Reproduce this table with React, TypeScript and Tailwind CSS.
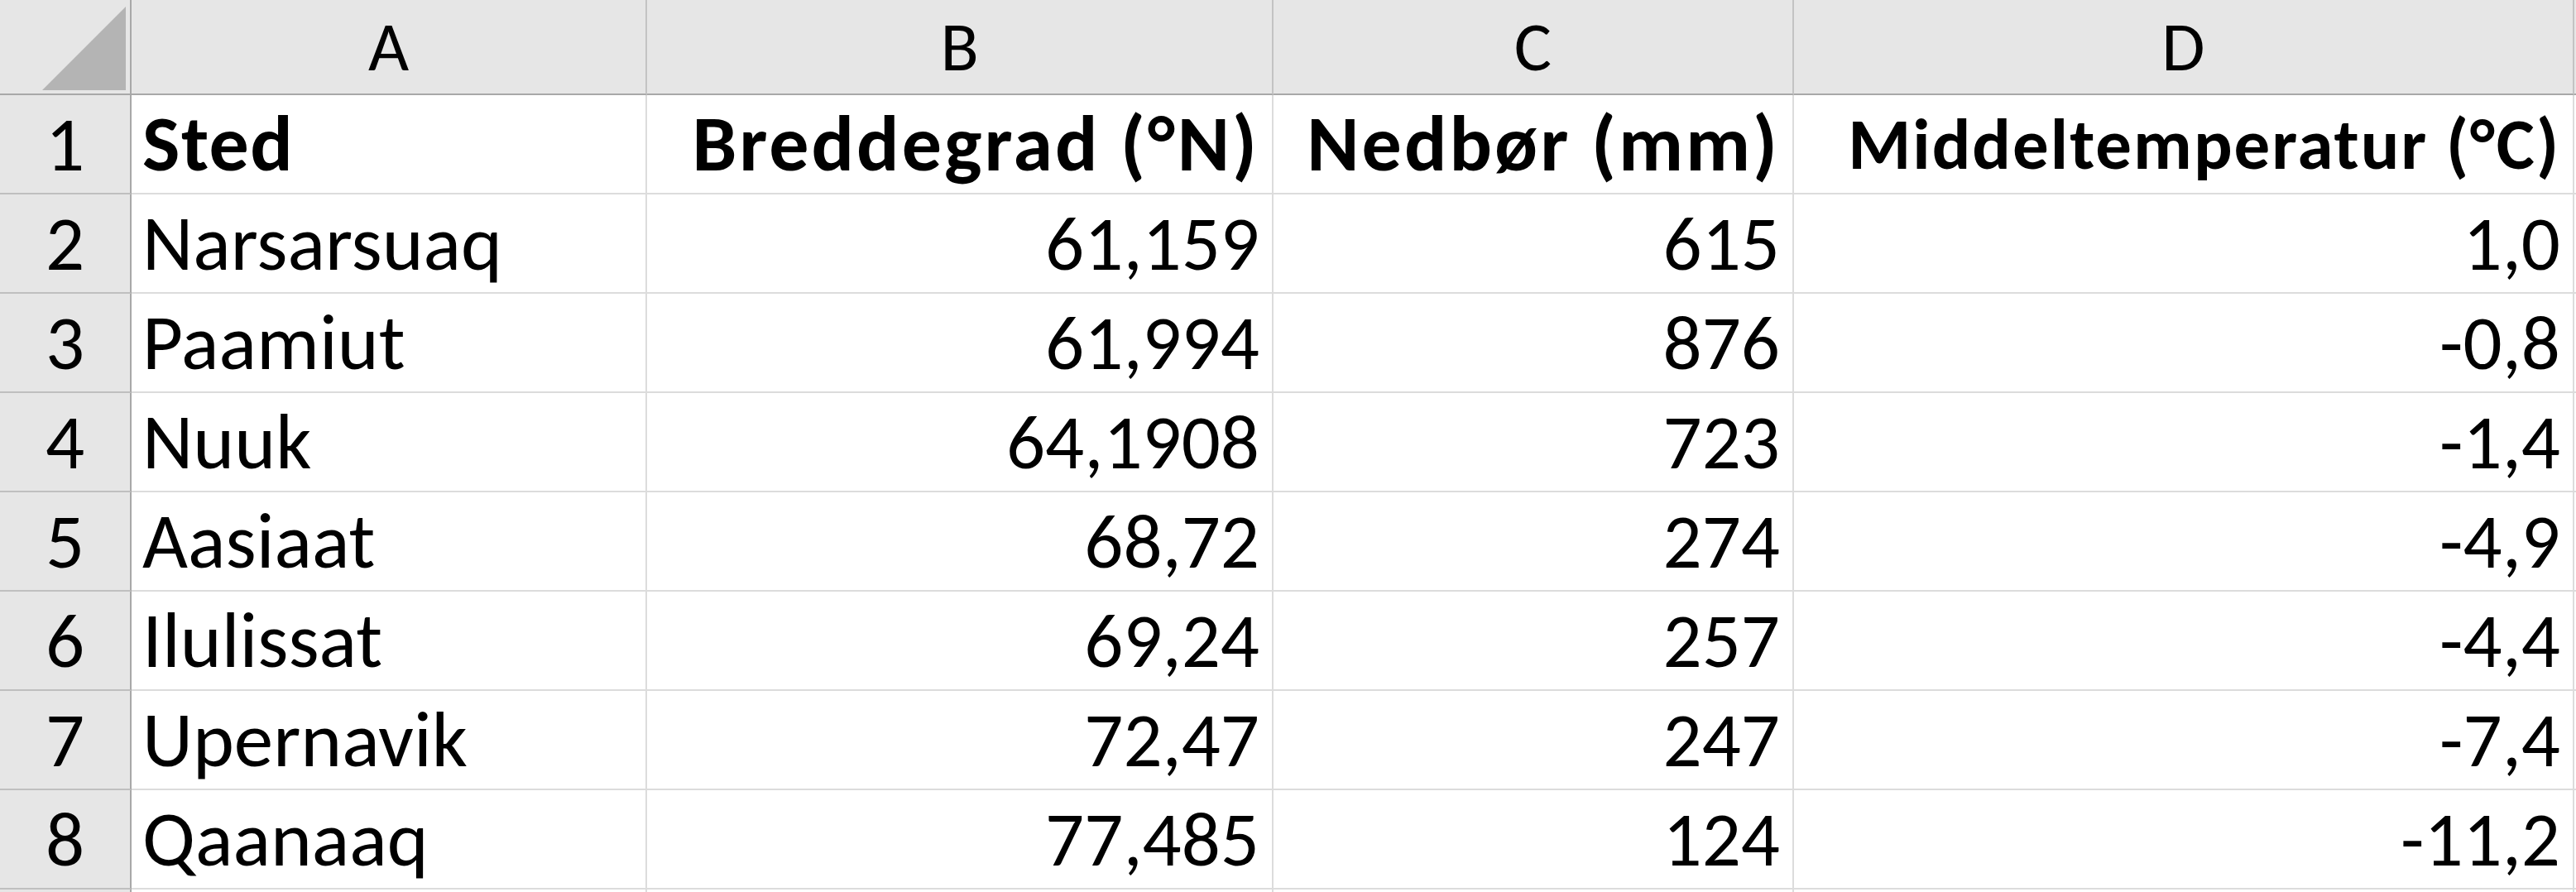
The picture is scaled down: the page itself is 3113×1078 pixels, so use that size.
import React from "react";

type Row = { sted: string; b: string; c: string; d: string };

const rows: Row[] = [
  { sted: "Narsarsuaq", b: "61,159", c: "615", d: "1,0" },
  { sted: "Paamiut", b: "61,994", c: "876", d: "-0,8" },
  { sted: "Nuuk", b: "64,1908", c: "723", d: "-1,4" },
  { sted: "Aasiaat", b: "68,72", c: "274", d: "-4,9" },
  { sted: "Ilulissat", b: "69,24", c: "257", d: "-4,4" },
  { sted: "Upernavik", b: "72,47", c: "247", d: "-7,4" },
  { sted: "Qaanaaq", b: "77,485", c: "124", d: "-11,2" },
];

const colHead =
  "h-[115px] bg-[#e6e6e6] border-r-2 border-b-2 border-r-[#c3c3c3] border-b-[#a8a8a8] flex items-center justify-center text-[85px] leading-none text-black";
const rowHead =
  "h-[120px] bg-[#e6e6e6] border-r-2 border-b-2 border-r-[#a8a8a8] border-b-[#bfbfbf] flex items-center justify-center text-[93px] leading-none text-black";
const cellL =
  "h-[120px] bg-white border-r-2 border-b-2 border-[#dcdcdc] flex items-center justify-start pl-[13px] text-[95px] leading-none text-black whitespace-nowrap overflow-hidden";
const cellR =
  "h-[120px] bg-white border-r-2 border-b-2 border-[#dcdcdc] flex items-center justify-end pr-[15px] text-[93px] leading-none text-black whitespace-nowrap overflow-hidden";
const cellRBold =
  "h-[120px] bg-white border-r-2 border-b-2 border-[#dcdcdc] flex items-center justify-end pr-[15px] text-[96px] leading-none font-bold tracking-[3px] text-black whitespace-nowrap overflow-hidden";

export default function App() {
  return (
    <div className="w-[3113px] h-[1078px] overflow-hidden bg-white font-['Carlito','Liberation_Sans',sans-serif]">
      <div className="grid grid-cols-[159px_623px_757px_629px_943px_1fr]">
        {/* header row */}
        <div className="h-[115px] bg-[#e6e6e6] border-r-2 border-b-2 border-r-[#a8a8a8] border-b-[#a8a8a8] relative">
          <svg className="absolute left-0 top-0" width="157" height="113" viewBox="0 0 157 113">
            <polygon points="152,8 152,109 51,109" fill="#b4b4b4" />
          </svg>
        </div>
        <div className={colHead}>A</div>
        <div className={colHead}>B</div>
        <div className={colHead}>C</div>
        <div className={colHead}>D</div>
        <div className="h-[115px] bg-[#e6e6e6] border-b-2 border-b-[#a8a8a8]" />

        {/* row 1 */}
        <div className={rowHead}>1</div>
        <div className={`${cellL} font-bold text-[96px] tracking-[1.5px]`}>Sted</div>
        <div className={`${cellRBold} tracking-[3.5px]`}>Breddegrad (°N)</div>
        <div className={cellRBold}>Nedbør (mm)</div>
        <div className="h-[120px] bg-white border-r-2 border-b-2 border-[#dcdcdc] flex items-center justify-end pr-[15px] text-[87px] leading-none font-bold tracking-[2px] text-black whitespace-nowrap overflow-hidden">
          Middeltemperatur (°C)
        </div>
        <div className="h-[120px] bg-white border-b-2 border-[#dcdcdc]" />

        {rows.map((r, i) => (
          <React.Fragment key={r.sted}>
            <div className={rowHead}>{i + 2}</div>
            <div className={cellL}>{r.sted}</div>
            <div className={cellR}>{r.b}</div>
            <div className={cellR}>{r.c}</div>
            <div className={cellR}>{r.d}</div>
            <div className="h-[120px] bg-white border-b-2 border-[#dcdcdc]" />
          </React.Fragment>
        ))}

        {/* partial row 9 */}
        <div className="h-[120px] bg-[#e6e6e6] border-r-2 border-r-[#a8a8a8]" />
        <div className="h-[120px] bg-white border-r-2 border-[#dcdcdc]" />
        <div className="h-[120px] bg-white border-r-2 border-[#dcdcdc]" />
        <div className="h-[120px] bg-white border-r-2 border-[#dcdcdc]" />
        <div className="h-[120px] bg-white border-r-2 border-[#dcdcdc]" />
        <div className="h-[120px] bg-white" />
      </div>
    </div>
  );
}
